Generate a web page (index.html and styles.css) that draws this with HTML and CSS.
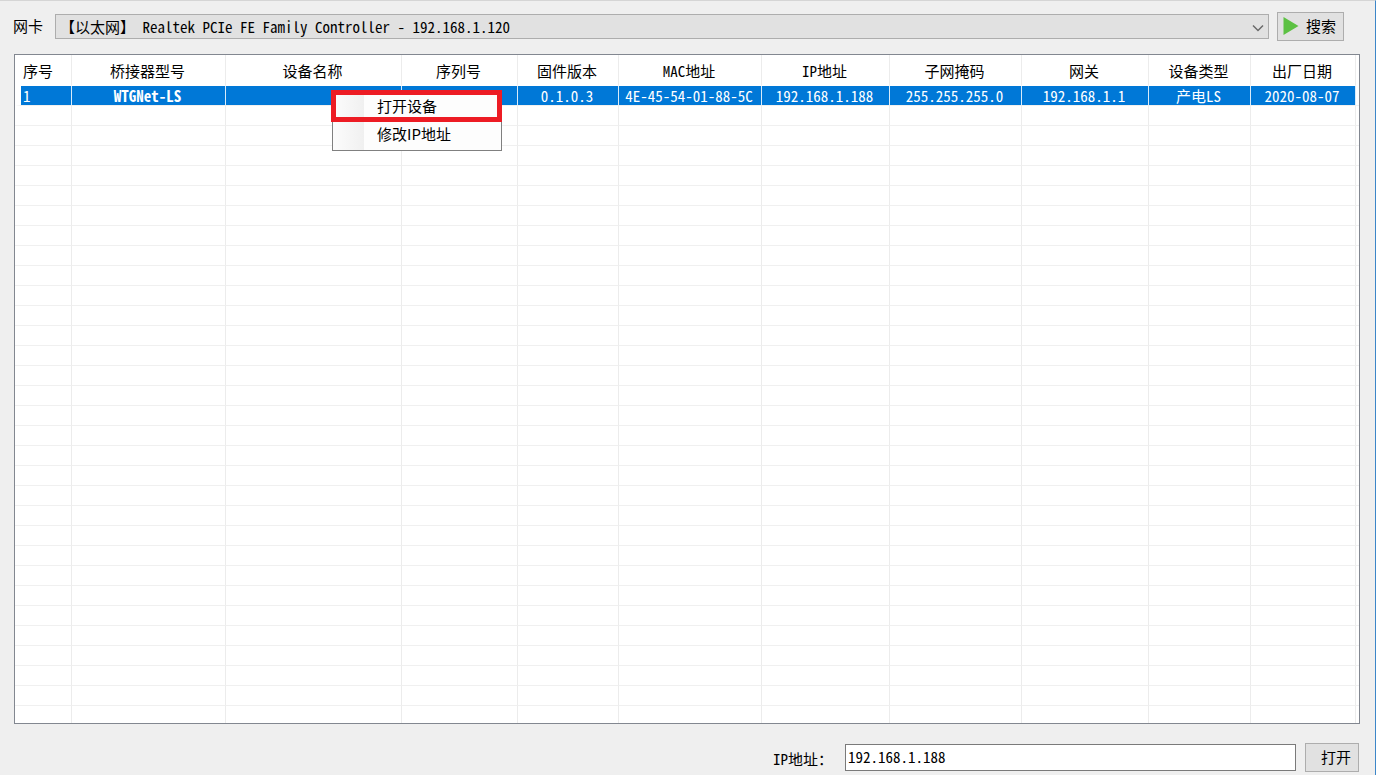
FILE: index.html
```html
<!DOCTYPE html>
<html lang="zh-CN">
<head>
<meta charset="utf-8">
<title>设备搜索</title>
<link rel="stylesheet" href="styles.css">
</head>
<body>
<main class="window">
  <form class="toolbar">
    <label class="toolbar-label" for="adapter">网卡</label>
    <div class="combo">
      <select id="adapter" class="combo-select">
        <option>【以太网】 Realtek PCIe FE Family Controller - 192.168.1.120</option>
      </select>
      <svg class="combo-arrow" viewBox="0 0 12 8" aria-hidden="true"><path d="M1 1.5 L6 6.500 L11 1.500" fill="none" stroke="#6a6a6a" stroke-width="1.500"/></svg>
    </div>
    <button class="button button-search" type="button">
      <svg class="play" viewBox="0 0 16 18" aria-hidden="true"><path d="M0.500 0 L15.500 9 L0.500 18 Z" fill="#5cc143"/></svg>
      搜索
    </button>
  </form>

  <section class="list">
    <table class="devices">
      <colgroup>
        <col class="col-index"><col class="col-model"><col class="col-name"><col class="col-serial"><col class="col-firmware"><col class="col-mac"><col class="col-ip"><col class="col-mask"><col class="col-gateway"><col class="col-type"><col class="col-date"><col class="col-rest">
      </colgroup>
      <thead>
        <tr><th class="left">序号</th><th>桥接器型号</th><th>设备名称</th><th>序列号</th><th>固件版本</th><th>MAC地址</th><th>IP地址</th><th>子网掩码</th><th>网关</th><th>设备类型</th><th>出厂日期</th><td class="rest"></td></tr>
      </thead>
      <tbody>
        <tr class="selected"><td class="left">1</td><td class="strong">WTGNet-LS</td><td></td><td></td><td>0.1.0.3</td><td>4E-45-54-01-88-5C</td><td>192.168.1.188</td><td>255.255.255.0</td><td>192.168.1.1</td><td>产电LS</td><td>2020-08-07</td><td class="rest"></td></tr>
      </tbody>
      <tbody id="empty-rows"></tbody>
    </table>
    <div class="menu" role="menu">
      <button class="menu-item menu-item-marked" type="button" role="menuitem">打开设备</button>
      <button class="menu-item" type="button" role="menuitem">修改IP地址</button>
    </div>
  </section>

  <form class="footer">
    <label class="footer-label" for="ip">IP地址：</label>
    <input id="ip" class="ip-input" type="text" value="192.168.1.188">
    <button class="button button-open" type="button">打开</button>
  </form>
</main>
<script src="rows.js"></script>
</body>
</html>
```
FILE: rows.js
```js
const body = document.getElementById("empty-rows");
const emptyRows = 31;
for (let r = 0; r < emptyRows; r++) {
  const row = body.insertRow();
  if (r === emptyRows - 1) row.className = "last";
  for (let c = 0; c < 12; c++) row.insertCell();
  row.lastChild.className = "rest";
}
```
FILE: styles.css
```css
* {
  box-sizing: border-box;
}

body {
  margin: 0;
  background: #efefef;
  color: #000;
  font: 15px/20px "Noto Sans CJK SC", sans-serif;
  font-feature-settings: "hwid";
  overflow: hidden;
}

button,
input,
select {
  font: inherit;
  font-feature-settings: inherit;
  color: inherit;
}

.window {
  min-height: 100vh;
  padding: 11px 15px 0 14px;
  border-top: 1px solid #d5d5d5;
  border-right: 1px solid #3c86c8;
}

.toolbar {
  display: flex;
  align-items: center;
  padding-right: 16px;
}

.toolbar-label {
  width: 42px;
  margin-left: -1px;
  padding-bottom: 2px;
}

.combo {
  position: relative;
  flex: 1;
  margin-right: 8px;
}

.combo-select {
  display: block;
  width: 100%;
  height: 25px;
  padding: 0 24px 0 4px;
  appearance: none;
  background: #e1e1e1;
  border: 1px solid #adadad;
  border-radius: 0;
}

.combo-arrow {
  position: absolute;
  top: 10px;
  right: 5px;
  width: 12px;
  height: 8px;
  pointer-events: none;
}

.button {
  display: flex;
  align-items: center;
  background: #e1e1e1;
  border: 1px solid #adadad;
}

.button-search {
  width: 67px;
  height: 29px;
  gap: 7px;
  padding: 0 5px 2px;
  white-space: nowrap;
}

.play {
  flex: none;
  width: 16px;
  height: 18px;
}

.list {
  position: relative;
  margin-top: 13px;
  border: 1px solid #828790;
  background: #fff;
}

.devices {
  width: 100%;
  table-layout: fixed;
  border-collapse: separate;
  border-spacing: 0;
}

.col-index { width: 57px; }
.col-model { width: 154px; }
.col-name { width: 176px; }
.col-serial { width: 116px; }
.col-firmware { width: 101px; }
.col-mac { width: 143px; }
.col-ip { width: 128px; }
.col-mask { width: 132px; }
.col-gateway { width: 127px; }
.col-type { width: 102px; }
.col-date { width: 105px; }
.col-rest { width: 3px; }

.devices th,
.devices td {
  height: 20px;
  padding: 0 2px 0 0;
  border-right: 1px solid #ececec;
  border-bottom: 1px solid #f0f0f0;
  text-align: center;
  font-weight: 400;
  line-height: 19px;
  white-space: nowrap;
}

.devices thead th,
.devices thead td {
  height: 31px;
  border-bottom-color: #fff;
}

.devices .left {
  padding-left: 8px;
  text-align: left;
}

.devices .selected td {
  background: #0078d7;
  border-right-color: #d9ebf9;
  color: #fff;
}

.devices .selected .left {
  padding-left: 2px;
  border-left: 6px solid #fff;
}

.devices .selected .strong {
  font-weight: 700;
}

.devices .last td {
  height: 17px;
  border-bottom: 0;
}

.devices .rest,
.devices .selected .rest {
  padding: 0;
  background: #fff;
  border-right: 0;
}

.menu {
  position: absolute;
  top: 35px;
  left: 317px;
  width: 170px;
  background: linear-gradient(90deg, #fcfcfc 0, #f0f0f0 31px, #fdfdfd 31px);
  border: 1px solid #808080;
}

.menu-item {
  display: block;
  width: 100%;
  height: 29px;
  padding: 0 0 4px 44px;
  background: none;
  border: 0;
  text-align: left;
  font-feature-settings: normal;
}

.menu-item-marked {
  width: 171px;
  height: 32px;
  margin: -1px -1px -1px -2px;
  padding: 0 0 0 41px;
  border: 5px solid #ed1c24;
}

.footer {
  display: flex;
  align-items: center;
  justify-content: flex-end;
  margin-top: 19px;
  padding-right: 1px;
}

.footer-label {
  width: 72px;
  padding-top: 2px;
  white-space: nowrap;
}

.ip-input {
  width: 451px;
  height: 27px;
  margin-right: 9px;
  padding: 0 2px 3px;
  background: #fff;
  border: 1px solid #7a7a7a;
  border-radius: 0;
}

.button-open {
  justify-content: flex-end;
  width: 54px;
  height: 29px;
  padding: 0 7px 2px;
}
```
